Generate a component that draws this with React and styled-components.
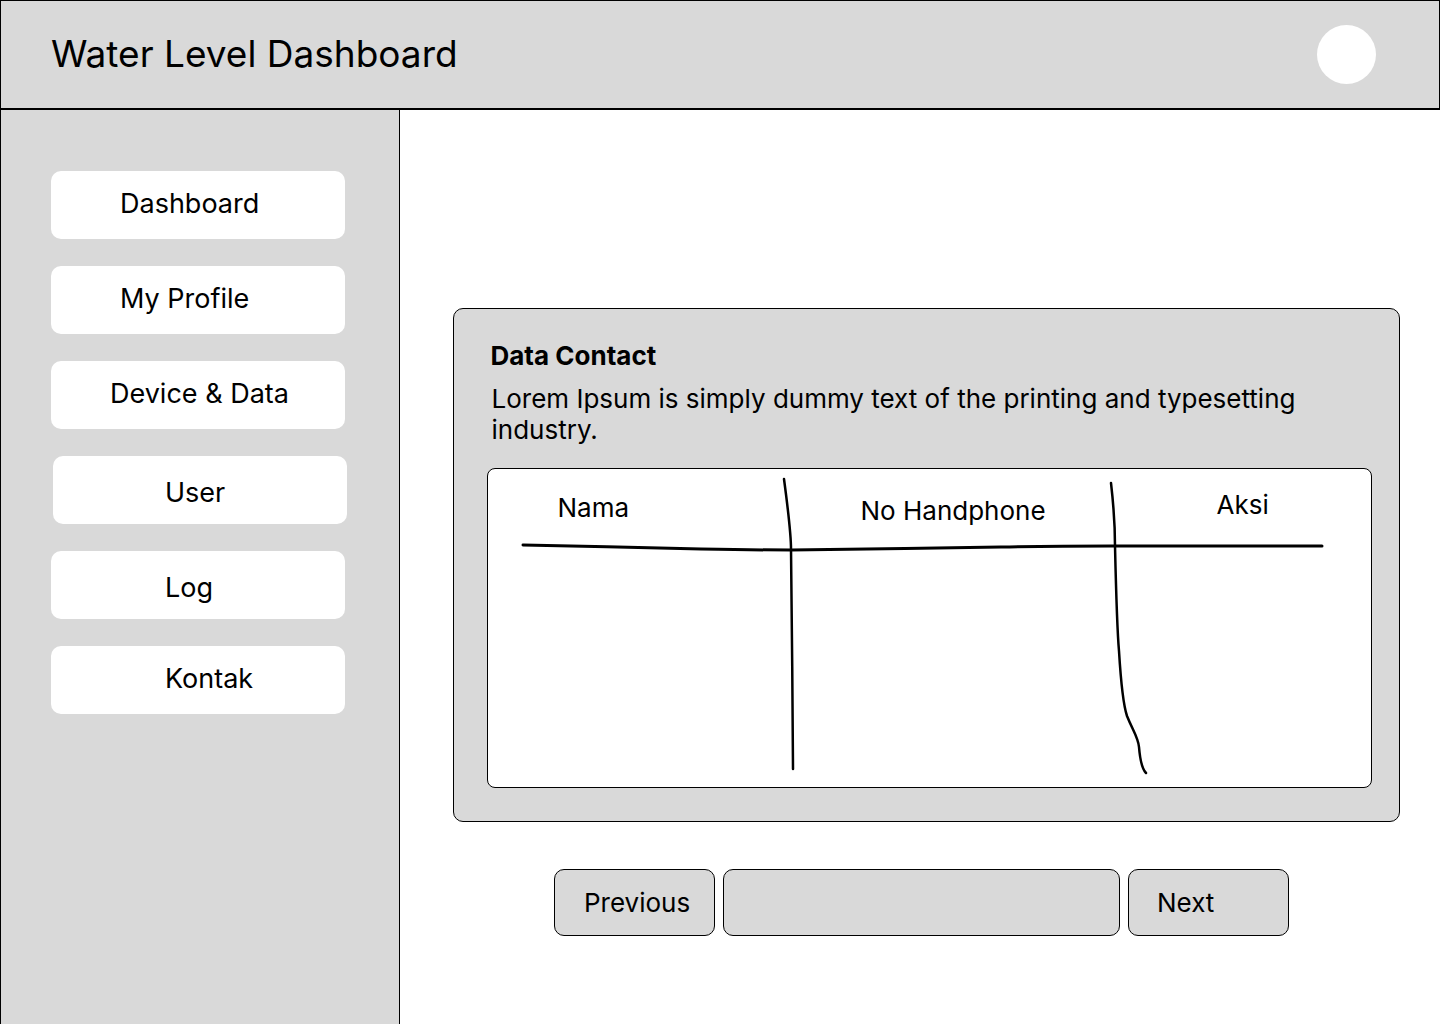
import React from 'react';
import styled, { createGlobalStyle } from 'styled-components';

const GlobalStyle = createGlobalStyle`
  * { box-sizing: border-box; }
  html, body { margin: 0; padding: 0; background: #ffffff; }
  body {
    font-family: Inter, "Noto Sans", sans-serif;
    color: #000;
  }
`;

const Page = styled.div`
  width: 1440px;
  height: 1024px;
  display: flex;
  flex-direction: column;
  overflow: hidden;
`;

const Header = styled.header`
  height: 110px;
  flex-shrink: 0;
  background: #d9d9d9;
  border: 1px solid #000;
  border-bottom-width: 2px;
  display: flex;
  align-items: center;
  justify-content: space-between;
  padding: 0 63px 0 50px;
`;

const Title = styled.h1`
  margin: 0 0 2px 0;
  font-size: 37px;
  font-weight: 400;
  letter-spacing: 0;
`;

const Avatar = styled.div`
  width: 59px;
  height: 59px;
  border-radius: 50%;
  background: #fff;
`;

const Body = styled.div`
  flex: 1;
  display: flex;
  min-height: 0;
`;

const Sidebar = styled.nav`
  width: 400px;
  flex-shrink: 0;
  background: #d9d9d9;
  border-left: 1px solid #000;
  border-right: 1px solid #000;
  padding: 61px 0 0 50px;
  display: flex;
  flex-direction: column;
  gap: 27px;
`;

const NavItem = styled.div`
  width: 294px;
  height: 68px;
  margin-left: ${p => p.$shift || 0}px;
  background: #fff;
  border-radius: 10px;
  display: flex;
  align-items: center;
  padding-left: ${p => p.$pl}px;
  padding-top: ${p => p.$dy || 0}px;
  padding-bottom: 3px;
  font-size: 27px;
`;

const Main = styled.main`
  flex: 1;
  display: flex;
  flex-direction: column;
  align-items: center;
  padding-top: 198px;
`;

const Card = styled.section`
  width: 947px;
  height: 514px;
  margin-left: 12px;
  background: #d9d9d9;
  border: 1px solid #000;
  border-radius: 10px;
  padding: 31px 27px 0 33px;
  display: flex;
  flex-direction: column;
`;

const CardTitle = styled.h2`
  margin: 0 0 0 4px;
  font-size: 26px;
  font-weight: 700;
  line-height: 32px;
`;

const CardText = styled.p`
  margin: 11px 0 0 5px;
  font-size: 26px;
  line-height: 31px;
  width: 830px;
`;

const TableBox = styled.div`
  position: relative;
  margin-top: 23px;
  width: 885px;
  height: 320px;
  background: #fff;
  border: 1px solid #000;
  border-radius: 8px;
`;

const HeadRow = styled.div`
  display: grid;
  grid-template-columns: 296px 327px 1fr;
`;

const HeadCell = styled.div`
  padding-left: ${p => p.$pl}px;
  padding-top: ${p => p.$pt}px;
  font-size: 26px;
  line-height: 30px;
`;

const Sketch = styled.svg`
  position: absolute;
  left: 0;
  top: 0;
  pointer-events: none;
`;

const Pager = styled.div`
  margin-top: 47px;
  margin-left: 3px;
  display: flex;
  gap: 8px;
`;

const PageButton = styled.button`
  width: ${p => p.$w}px;
  height: 67px;
  background: #d9d9d9;
  border: 1px solid #000;
  border-radius: 10px;
  font-family: inherit;
  font-size: 26px;
  color: #000;
  text-align: left;
  padding: 0 0 0 ${p => p.$pl || 0}px;
`;

const navItems = [
  { label: 'Dashboard', pl: 69 },
  { label: 'My Profile', pl: 69 },
  { label: 'Device & Data', pl: 59 },
  { label: 'User', pl: 112, shift: 2, dy: 8 },
  { label: 'Log', pl: 114, dy: 7 },
  { label: 'Kontak', pl: 114 },
];

export default function App() {
  return (
    <Page>
      <GlobalStyle />
      <Header>
        <Title>Water Level Dashboard</Title>
        <Avatar />
      </Header>
      <Body>
        <Sidebar>
          {navItems.map(item => (
            <NavItem key={item.label} $pl={item.pl} $shift={item.shift} $dy={item.dy}>
              {item.label}
            </NavItem>
          ))}
        </Sidebar>
        <Main>
          <Card>
            <CardTitle>Data Contact</CardTitle>
            <CardText>
              Lorem Ipsum is simply dummy text of the printing and typesetting industry.
            </CardText>
            <TableBox>
              <HeadRow>
                <HeadCell $pl={70} $pt={24}>Nama</HeadCell>
                <HeadCell $pl={77} $pt={27}>No Handphone</HeadCell>
                <HeadCell $pl={106} $pt={21}>Aksi</HeadCell>
              </HeadRow>
              <Sketch width="885" height="320" viewBox="0 0 885 320" fill="none" stroke="#000" strokeLinecap="round" strokeLinejoin="round">
                <path d="M35 76 C 90 77, 160 79, 213 80 S 300 81, 303 81 S 460 79, 513 78 S 600 77, 623 77 L 834 77" strokeWidth="3" />
                <path d="M296 10 C 300 40, 303 70, 303 80 S 305 250, 305 300" strokeWidth="2.5" />
                <path d="M623 14 C 626 40, 627 60, 627 77 C 628 120, 629 160, 631 182 C 633 215, 635 235, 639 247 C 645 262, 650 268, 651 278 C 652 290, 654 300, 658 304" strokeWidth="2.5" />
              </Sketch>
            </TableBox>
          </Card>
          <Pager>
            <PageButton $w={161} $pl={29}>Previous</PageButton>
            <PageButton $w={397} />
            <PageButton $w={161} $pl={28}>Next</PageButton>
          </Pager>
        </Main>
      </Body>
    </Page>
  );
}
